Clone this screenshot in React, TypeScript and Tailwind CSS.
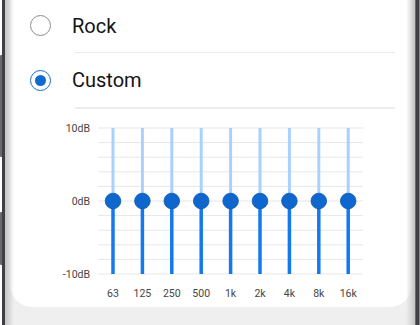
const bands = ["63", "125", "250", "500", "1k", "2k", "4k", "8k", "16k"];

const gridTop = 19;
const gridStep = 14.6;
const zeroY = gridTop + gridStep * 5;
const bottomY = gridTop + gridStep * 10;

function Equalizer() {
  return (
    <svg width="402" height="199" className="block" style={{ fontFamily: "Roboto, sans-serif" }}>
      {Array.from({ length: 11 }).map((_, i) => (
        <line
          key={i}
          x1={88}
          x2={353}
          y1={gridTop + gridStep * i}
          y2={gridTop + gridStep * i}
          stroke="#e7e7e7"
          strokeWidth={1}
        />
      ))}
      <text x={80} y={gridTop + 4} textAnchor="end" fontSize="10.5" fill="#444">10dB</text>
      <text x={80} y={zeroY + 4} textAnchor="end" fontSize="10.5" fill="#444">0dB</text>
      <text x={80} y={bottomY + 4} textAnchor="end" fontSize="10.5" fill="#444">-10dB</text>
      {bands.map((b, i) => {
        const x = 103 + 29.4 * i;
        return (
          <g key={b}>
            <line x1={x} x2={x} y1={gridTop} y2={zeroY} stroke="#a9d1fb" strokeWidth={3} />
            <line x1={x} x2={x} y1={zeroY} y2={bottomY} stroke="#1478ee" strokeWidth={3.5} />
            <circle cx={x} cy={zeroY} r={7.8} fill="#0f66cc" stroke="#0b5bb8" strokeWidth={0.8} />
            <text x={x} y={188} textAnchor="middle" fontSize="10.5" fill="#444">{b}</text>
          </g>
        );
      })}
    </svg>
  );
}

export default function App() {
  return (
    <div className="w-[420px] h-[325px] bg-white flex overflow-hidden" style={{ fontFamily: "Roboto, 'Liberation Sans', sans-serif" }}>
      {/* left bezel with side keys */}
      <div className="flex w-[5px] shrink-0">
        <div className="flex flex-col w-[2px]">
          <div className="h-[55px]" />
          <div className="h-[102px] bg-[#68686d] rounded-l-[1px]" />
          <div className="h-[55px]" />
          <div className="h-[53px] bg-[#68686d] rounded-l-[1px]" />
        </div>
        <div className="w-[3px] bg-[#3f3f44]" />
      </div>

      {/* screen */}
      <div className="relative flex-1 bg-[#efefef] flex flex-col">
        <div className="bg-white rounded-b-[22px] ml-[5px] mr-[3px] h-[307px] flex flex-col">
          <div className="h-[52px] flex items-center pl-[20px]">
            <div className="w-[21px] h-[21px] rounded-full border-[1.5px] border-[#8c8c8c]" />
            <span className="ml-[21px] text-[20px] text-[#141414]">Rock</span>
          </div>
          <div className="h-[1.5px] bg-[#ececec] ml-[65px] mr-[17px]" />
          <div className="h-[54px] flex items-center pl-[20px]">
            <div className="w-[21px] h-[21px] rounded-full border-[1.5px] border-[#1a6fd0] flex items-center justify-center">
              <div className="w-[11px] h-[11px] rounded-full bg-[#0f6ad2]" />
            </div>
            <span className="ml-[21px] text-[20px] text-[#141414]">Custom</span>
          </div>
          <div className="h-[1.5px] bg-[#ececec] ml-[65px] mr-[17px]" />
          <Equalizer />
        </div>

        {/* bezel shading over the screen edges */}
        <div className="absolute left-0 top-0 bottom-0 w-[9px] bg-linear-to-r from-[#c4c4c4] to-transparent" />
        <div className="absolute right-0 top-0 bottom-0 w-[9px] bg-linear-to-l from-[#c4c4c4] to-transparent" />
      </div>

      {/* right bezel */}
      <div className="w-[5px] shrink-0 flex">
        <div className="w-[1px] bg-[#6a6a6f]" />
        <div className="w-[3px] bg-[#3f3f44]" />
        <div className="w-[1px] bg-[#8a8a8e]" />
      </div>
    </div>
  );
}
